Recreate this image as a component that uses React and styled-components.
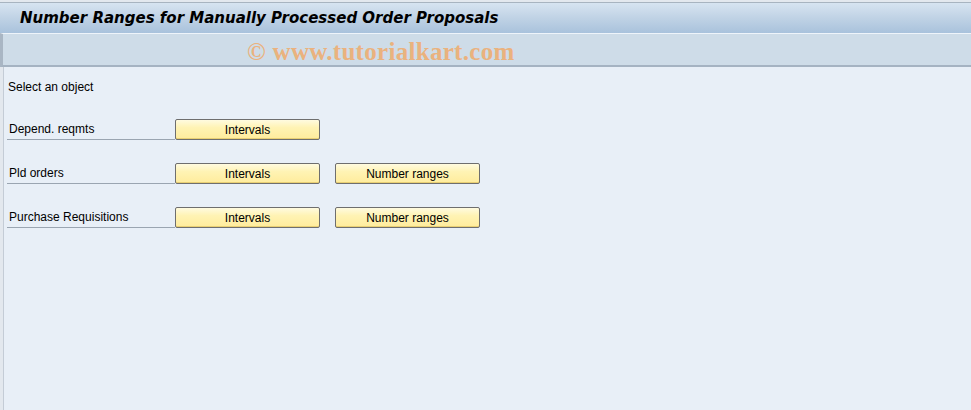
import React from "react";
import styled, { createGlobalStyle } from "styled-components";

const GlobalStyle = createGlobalStyle`
  html, body {
    margin: 0;
    padding: 0;
    background: #eef2f6;
  }
  body {
    font-family: Tahoma, "Liberation Sans", Arial, sans-serif;
  }
`;

const Screen = styled.div`
  width: 971px;
  height: 410px;
  display: flex;
  flex-direction: column;
  box-sizing: border-box;
  padding-top: 2px;
  background: #e3e8ee;
  overflow: hidden;
`;

const TitleBar = styled.div`
  height: 31px;
  border-top: 1px solid #a8b4c0;
  background: linear-gradient(180deg, #d7e4f1 0%, #c2d4e6 45%, #a9c2dc 100%);
  display: flex;
  align-items: center;
  padding: 0 0 1px 20px;
  box-sizing: border-box;
`;

const Title = styled.h1`
  margin: 0;
  font-family: "DejaVu Sans", Verdana, sans-serif;
  font-size: 15px;
  font-weight: bold;
  font-style: italic;
  color: #000;
`;

const Toolbar = styled.div`
  height: 34px;
  box-sizing: border-box;
  border-top: 1px solid #eef4fa;
  border-bottom: 2px solid #a5b3c2;
  border-left: 3px solid #a9b6c4;
  background: #cedce8;
  display: flex;
  align-items: center;
  padding: 4px 0 0 244px;
`;

const Watermark = styled.span`
  font-family: "Liberation Serif", "Times New Roman", serif;
  font-size: 25px;
  font-weight: bold;
  color: #eab27e;
  letter-spacing: 0.3px;
`;

const Content = styled.div`
  flex: 1;
  margin-left: 3px;
  border-left: 1px solid #c4ccd6;
  background: #e8eff7;
  padding: 13px 0 0 4px;
  display: flex;
  flex-direction: column;
`;

const Intro = styled.div`
  font-size: 12px;
  color: #000;
  height: 14px;
  line-height: 14px;
  margin-bottom: 25px;
`;

const Row = styled.div`
  display: flex;
  align-items: flex-end;
  height: 21px;
  margin-bottom: 23px;
`;

const Label = styled.div`
  width: 168px;
  margin-left: -1px;
  height: 21px;
  box-sizing: border-box;
  border-bottom: 1px solid #9aa5b1;
  font-size: 12px;
  color: #000;
  padding-left: 2px;
  line-height: 20px;
`;

const Button = styled.button`
  width: 145px;
  height: 21px;
  margin-left: ${p => p.$gap || 0}px;
  box-sizing: border-box;
  border: 1px solid #6e6e6e;
  border-radius: 2px;
  background: linear-gradient(180deg, #fffbe0 0%, #fff3b4 40%, #ffec9c 100%);
  box-shadow: inset 0 -1px 0 #e8cf74;
  font-family: Tahoma, "Liberation Sans", Arial, sans-serif;
  font-size: 12px;
  color: #000;
  padding: 0;
  cursor: pointer;
`;

const rows = [
  { label: "Depend. reqmts", buttons: ["Intervals"] },
  { label: "Pld orders", buttons: ["Intervals", "Number ranges"] },
  { label: "Purchase Requisitions", buttons: ["Intervals", "Number ranges"] },
];

export default function App() {
  return (
    <>
      <GlobalStyle />
      <Screen>
        <TitleBar>
          <Title>Number Ranges for Manually Processed Order Proposals</Title>
        </TitleBar>
        <Toolbar>
          <Watermark>© www.tutorialkart.com</Watermark>
        </Toolbar>
        <Content>
          <Intro>Select an object</Intro>
          {rows.map(r => (
            <Row key={r.label}>
              <Label>{r.label}</Label>
              {r.buttons.map((b, i) => (
                <Button key={b} $gap={i === 0 ? 0 : 15}>{b}</Button>
              ))}
            </Row>
          ))}
        </Content>
      </Screen>
    </>
  );
}
